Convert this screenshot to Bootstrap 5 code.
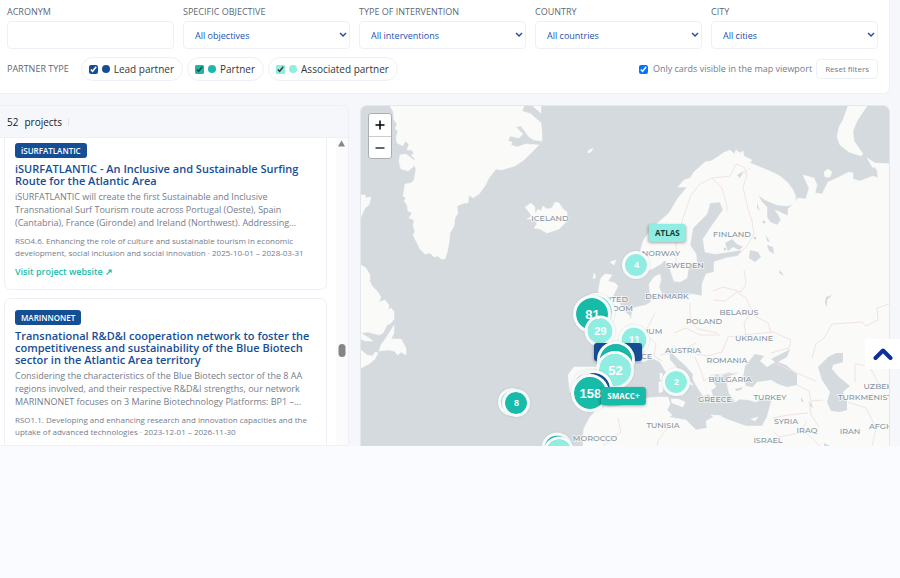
<!DOCTYPE html>
<html lang="en">
<head>
<meta charset="utf-8">
<meta name="viewport" content="width=device-width, initial-scale=1">
<title>Atlantic Area projects map</title>
<link href="https://cdn.jsdelivr.net/npm/bootstrap@5.3.0/dist/css/bootstrap.min.css" rel="stylesheet">
<style>
:root{--navy:#164e96;--teal:#18baa8;--mint:#8feee1;--line:#edf0f6;--muted-ink:#747c8b}
body{background:#fafbfe;font-family:"Segoe UI","Open Sans","Noto Sans",sans-serif;font-size:9px;line-height:14px;color:#22252b;overflow:hidden}
.viewer{background:#f5f7fb;height:77vh;min-height:446px;overflow:hidden;padding-right:10px}
.filters{border:1px solid var(--line);border-width:0 1px 1px 0;border-radius:0 0 7px 0;padding:5px 11px 12px 7px}
.filter-grid{display:grid;grid-template-columns:repeat(5,1fr);gap:9px}
.caption{font-size:9px;line-height:14px;color:#5d6876;font-weight:500;text-transform:uppercase;white-space:nowrap}
.filter-grid .caption{display:block;margin-bottom:2px}
.filter-grid .form-control,.filter-grid .form-select{height:28px;font-size:9px;line-height:14px;border-color:var(--line);border-radius:4px;color:#2450ad;font-weight:500;padding:6px 20px 4px 11px}
.filter-grid .form-select{background-image:url("data:image/svg+xml,%3csvg xmlns='http://www.w3.org/2000/svg' viewBox='0 0 8 6'%3e%3cpath fill='none' stroke='%232450ad' stroke-width='1.5' d='M1 1l3 3 3-3'/%3e%3c/svg%3e");background-size:8px 6px;background-position:right 2px center}
.pill{border:1px solid var(--line);border-radius:12px;height:24px;padding:0 8px 0 7px;gap:4px;color:#33373d;font-size:10px}
.pill input,.only-visible input{width:9px;height:9px;margin:0}
.dot{width:8px;height:8px;border-radius:50%}
.lead-c{accent-color:var(--navy)}.lead-d{background:var(--navy)}
.part-c{accent-color:var(--teal)}.part-d{background:var(--teal)}
.asso-c{accent-color:var(--mint)}.asso-d{background:var(--mint)}
.only-visible{color:var(--muted-ink);gap:5px}
.btn-reset{font-size:8px;line-height:14px;font-weight:500;color:#727985;background:#fff;border:1px solid var(--line);border-radius:4px;padding:2px 8px}
.panels{display:grid;grid-template-columns:349fr 529fr;gap:11px;padding-top:11px}
.project-panel{border:1px solid var(--line);border-left:0;border-radius:0 7px 0 0;min-height:0;overflow:hidden}
.panel-title{height:32px;padding-left:7px;font-size:10px;font-weight:500;border-bottom:1px solid var(--line);color:#15181d;gap:6px}
.tick-line{width:1px;height:8px;background:#e2e5ea}
.project-list{padding:0 9px 0 4px;gap:8px;min-height:0;overflow:hidden}
.project{border:1px solid var(--line);border-radius:7px;padding:11px 8px 10px 10px;flex:none}
.project.scrolled{border-top:0;border-radius:0 0 7px 7px;padding-top:5px}
.tag{background:var(--navy);color:#fff;font-size:8px;line-height:15px;font-weight:600;border-radius:3px;padding:0 6px}
.project h3{font-size:11px;line-height:12px;font-weight:600;color:var(--navy);margin:5px 0 3px}
.project .blurb{font-size:9px;line-height:13px;color:var(--muted-ink);margin:0 0 6px}
.project .meta{font-size:8px;line-height:12px;color:var(--muted-ink);margin:0 0 6px}
.project a{font-size:9px;line-height:14px;font-weight:600;color:#1cbcaa;text-decoration:none}
.scroll-track{width:12px;background:#fbfbfc}
.scroll-track svg{display:block;width:100%}
.map{background:#d4dadd;border:1px solid #e3e8ee;border-bottom:0;border-radius:7px 7px 0 0;overflow:hidden}
.map>svg{display:block;width:100%;height:100%}
.map text{font-family:"Montserrat","Inter",sans-serif;font-size:8px;font-weight:500;fill:#8795a5;stroke:#fafbfa;stroke-width:2px;stroke-opacity:.7;paint-order:stroke;text-anchor:middle}
.zoom{left:7px;top:7px;border:1px solid #a9afb3;border-radius:3px;background:#fff}
.zoom button{display:block;border:0;background:none;width:22px;height:22px;padding:0;line-height:0}
.zoom button+button{border-top:1px solid #ccc}
.pin{position:absolute;transform:translate(-50%,-50%);border:3px solid #f7fbfb;border-radius:50%;background:var(--mint);background-clip:padding-box;color:#fff;font:700 9px/1 "Liberation Sans",Arial,sans-serif;width:28px;height:28px;padding:0;box-shadow:0 0 2px #0002}
.pin.teal{background-color:var(--teal)}.pin.navy{background-color:var(--navy)}
.pin.mid{width:31px;height:31px;font-size:11px}
.pin.big{width:38px;height:38px;font-size:13px}
.pin-name{position:absolute;transform:translate(-50%,-50%);border:0;border-radius:3px;height:18px;padding:0 6px;font-size:8px;line-height:18px;font-weight:700;box-shadow:0 1px 3px #0005;white-space:nowrap}
.to-top{position:fixed;right:0;top:339px;width:35px;height:30px;border:0;background:#fff;padding:0 0 0 1px}
</style>
</head>
<body>
<main class="viewer d-flex flex-column">
<form class="filters bg-white">
  <div class="filter-grid">
    <div><label class="caption" for="acr">Acronym</label><input id="acr" class="form-control" type="text"></div>
    <div><label class="caption" for="obj">Specific objective</label><select id="obj" class="form-select"><option>All objectives</option></select></div>
    <div><label class="caption" for="typ">Type of intervention</label><select id="typ" class="form-select"><option>All interventions</option></select></div>
    <div><label class="caption" for="cou">Country</label><select id="cou" class="form-select"><option>All countries</option></select></div>
    <div><label class="caption" for="cit">City</label><select id="cit" class="form-select"><option>All cities</option></select></div>
  </div>
  <div class="d-flex align-items-center mt-2">
    <span class="caption me-2 pe-1">Partner type</span>
    <div class="d-flex gap-1">
      <label class="pill d-flex align-items-center"><input class="lead-c" type="checkbox" checked><span class="dot lead-d"></span>Lead partner</label>
      <label class="pill d-flex align-items-center"><input class="part-c" type="checkbox" checked><span class="dot part-d"></span>Partner</label>
      <label class="pill d-flex align-items-center"><input class="asso-c" type="checkbox" checked><span class="dot asso-d"></span>Associated partner</label>
    </div>
    <label class="only-visible d-flex align-items-center ms-auto me-1"><input type="checkbox" checked>Only cards visible in the map viewport</label>
    <button class="btn-reset" type="button">Reset filters</button>
  </div>
</form>

<div class="panels flex-grow-1 overflow-hidden">
  <section class="project-panel d-flex flex-column">
    <div class="panel-title d-flex align-items-center flex-shrink-0"><span>52</span><span>projects</span><span class="tick-line"></span></div>
    <div class="d-flex flex-grow-1 bg-white overflow-hidden">
      <div class="project-list d-flex flex-column flex-grow-1">
        <article class="project scrolled">
          <div class="d-flex"><span class="tag">iSURFATLANTIC</span></div>
          <h3>iSURFATLANTIC - An Inclusive and Sustainable Surfing Route for the Atlantic Area</h3>
          <p class="blurb">iSURFATLANTIC will create the first Sustainable and Inclusive<br>Transnational Surf Tourism route across Portugal (Oeste), Spain<br>(Cantabria), France (Gironde) and Ireland (Northwest). Addressing...</p>
          <p class="meta">RSO4.6. Enhancing the role of culture and sustainable tourism in economic<br>development, social inclusion and social innovation · 2025-10-01 – 2028-03-31</p>
          <a href="#">Visit project website ↗</a>
        </article>
        <article class="project">
          <div class="d-flex"><span class="tag">MARINNONET</span></div>
          <h3>Transnational R&amp;D&amp;I cooperation network to foster the competitiveness and sustainability of the Blue Biotech sector in the Atlantic Area territory</h3>
          <p class="blurb">Considering the characteristics of the Blue Biotech sector of the 8 AA<br>regions involved, and their respective R&amp;D&amp;I strengths, our network<br>MARINNONET focuses on 3 Marine Biotechnology Platforms: BP1 –...</p>
          <p class="meta">RSO1.1. Developing and enhancing research and innovation capacities and the<br>uptake of advanced technologies · 2023-12-01 – 2026-11-30</p>
        </article>
      </div>
      <div class="scroll-track flex-shrink-0"><svg viewBox="0 0 12 309" aria-hidden="true"><path d="M2 8.500L5.500 2.500 9 8.500Z" fill="#858585"/><rect x="2.500" y="206" width="7" height="13" rx="3.500" fill="#858585"/></svg></div>
    </div>
  </section>

  <section class="map position-relative" aria-label="Partner map">
    <svg viewBox="361 106 528 340" preserveAspectRatio="xMinYMin slice">
      <g fill="#fafbf9" stroke="#fafbf9" stroke-width=".5" stroke-linejoin="round">
        <path d="M390 106l3 5 1 9 3 4-2 5 3 2-2 6 1 6 6 3 2-5 4 3-2 6 5 0 2 4-3 1 4 4-1 6 2 4-2 11-3 3-6 1-1 6-1 6 3 2-2 3 3 4 1 6 4 2-3 5 5 2-1 6 2 5-2 4 3 6 4 8 5 5 5-1 4 4 4-1 3 3 4 0 2-6 2-10 1-10 4-7 1-8 3-5-1-7 7-3 4 0 1-8 4 3 6-4 6-8 4-8 7-9 5 1 14-4 9-6 15-15-13-1-9 3-6-2 1-3-4-1 2-5 9 2 4-4-7-7 5-1 8 11 5 3 8 1 0-9-1-9-10-9-9-3 3-7-3-3 7 2 12 10 0-11-9-6-2-4 6 1 2-4 12 1 5-3-3-6-4-1 0-4z"/>
        <path d="M400 155l6-1 9 7-2 6-5 4-7-2-2-7zM361 195l4 0 1 3 5-1-2 8-4 3-4 9zM361 265l5 3 4 7 0 5-9-2zM361 270l7 7 4 9 5 5 4 6-2 5 6-2 4 5-1 5 3-2 3 4 0 7-3 4-4 2-4 8-4 2-11-3-9 1z"/>
        <path d="M394 325l-6 10-7 10-2 6 10-1 5 1 4 4 3-3 5 3 0-7-5-9-7 0-3 0 3-6zM361 333l8 5 4 3-8 0-4-2zM361 350l6 5 6 1 2-4 3 1-3 6-6 5-8 4z"/>
        <path d="M525 207l6-4 4 4 0 7 3-5 3 2 2-5 4 3 5-1 3-6 4 1 4 6 4 3 0 9-8 8-12 4-7-4-6-1 3-4-3-5-7 0 5-3zM588 151l5-3-2 4-3 1z"/>
        <path d="M601 278l4-4 7 1-4 6 7 2 3 3-5 10 5 4 5 10 7 6-1 7-6 5-9 2-13 2-5-2 8-5-2-6 4-5 0-8-5-2 2-7-5-2 1-8zM594 303l-10-2-5 4-2 9 0 10 10-1 8-5 2-10z"/>
        <path d="M678 187l6-7 6-2 4-6 11-10 6-1 8-5 4-3 7-3 4 4 2-4 4 3 3-2 1 5 8 4-2 3 10 4 12 5 8 4 8 7 5 7 3 7-2 6-6 3-11-1-12-5-7-5 4 7 5 5 0 10 3 5 7 3 4-5-2-4-4-6 5 2 8 4 0-7 10-11 8 1 3-11-6-13 11 3 3 7-2 8 7 1 6-12 9-4 12-6 4 1 0 6 7 2 13-5 5 2-1-8-4-5 2-2 17 1v290H583l0-19 1-7 6-11 10-11 2-4 6 5 12-1 17-7 20-2 11 0 2 7-3 6 5 5-3 2 17 3 10 10 11-2-1-7 11-6 12 5 17 6 16 0 5-9 5-18-9-1-7 4-7-2-9-1-5 3-6-9-2-9 2-8 8-2-9-2-7 4-5-2-4 5 4 8-5 3 2 7-5-3-5 2-7-11-3-6 0-5-7-8-10-9-7-7 1 10 8 9 9 8 6 8-6-1-2 9-4 3 0-8-13-12-8-14-8-4-9 4-8-2-6 8-11 8-7 13-6 10-12 2-10-3-5 0-8-6-2-17 6-8 22 0 7-10-2-10-8-8 4-3 9 2 3-4 7-6 10-4 5-6 2-10 13-3 5-3-2-18 5-7 6-3 1 6-2 7 4 10 14 1 15-4 10 2 0-12 4-10 8-2 0-10 12-4 12-2 4-6-27 4-10-2-2-13 10-15 10-14-3-8-10 1-3 11-14 14-3 17 6 9 1 8-8 2-2 14-7 4-6-1-4-12-5-9-4 4-11 6-8-6-2-12 3-11 8-12 18-16 9-15 9-11z"/>
        <path d="M848 106l-5 14-4 7-2 10 3 8 9 7 12 4 2-2-9-13-1-10 4-10 6-9 4-6zM824 172l4-3 4 3-2 5-5 0zM867 158l8 5-2 5zM678 299l5-2 3 5-5 2zM671 399h7l7 3-2 5-11-4zM659 382l4-1 0 10-4 2zM660 373l3 1-1 7-2-2zM711 415l11 1-7 2zM751 419l7-2-3 4zM635 394l4-1-1 2zM594 273l2 4-3 2zM610 262l6-2-2 5z"/>
      </g>
      <g fill="#d4dadd">
        <path d="M743 378l2-12 5-6 5-6 9 2-4 5 7 6 8-5-4-3 14-7 5-3-3 8-9 5 8 3 11 9 0 11-10 2-9-3-7-4-14 2-4 5-7-1zM735 389l8-2-2 3-5 1zM818 367l10-10 8-4 7 0 0 9-10 3-1 4 7 8 11 9-7 6 4 9 0 9-7 2-9-1-4-9 3-10-8-12zM750 250l8 2 3 5-6 5-6-4zM767 245l6 2 1 7-5-3zM737 175l7-4-4 7zM698 239l2 3 1 8-4 1zM725 243l7-4 5 5 6 3-4 3-6-3-5 4zM771 210l3 8-3-2zM766 235l4 7-3-1zM757 203l3 8-3-3zM826 297l6-2-5 5 0 7-2-4zM780 270l4 6-5-3zM801 397l3 5-3-1zM811 401l2 8-3-4zM824 443l6 3h-6z"/>
        <circle cx="720" cy="360" r="1"/><circle cx="725" cy="249" r="1.500"/><circle cx="755" cy="238" r="1.500"/><circle cx="764" cy="222" r="1.500"/>
      </g>
      <g fill="none" stroke="#f2e2e2" stroke-width="1" stroke-linejoin="round">
        <path d="M676 265v-22l7-25 8-23 9-11 12-6 10 10 5 18 0 5M712 178l18-2 6-12 8 3 3 8-4 12 5 22 4 12 2 13-8 13-8 8M750 168l-6 5M713 291l10-4 18 5 5-8-2-14M713 300l12 1 12-9 9 6 6 13-8 12 2 12-8 8M690 303l0 18 8 8 20 4M655 313l-7 14-7 6M646 334l10 10-2 12 8 5M660 355l20-4 16-8M674 333l12-5 14 7 20 0M686 350l10 4 12 2 14-4 6-15 25-3 20-2 18 8-2 8-18 5M695 357l6 14 3 10 8-6 26-2M708 382l10-2 18 2M775 363l17 8 14 6 10 4M797 385l12 6 2 10 12-1M809 401l2 14 8 12M773 418l15-3 20-2M773 431l6 6 20-4 8-12M812 358l4-14 8-6 8-14 30-2 4 4 12-6-1-12 12-4M855 382v-18l14 2 10 18 11 2M848 402l18 6 10 20-4 18M668 427l-10 14-1 5M618 418l3 14-18 14M800 427l20 19M753 315l15 8 3 10"/>
      </g>
      <g>
        <text x="550" y="221">ICELAND</text><text x="732" y="237">FINLAND</text><text x="661" y="256">NORWAY</text><text x="685" y="268">SWEDEN</text><text x="667" y="299">DENMARK</text><text x="612" y="302">UNITED</text><text x="612" y="311">KINGDOM</text><text x="739" y="315">BELARUS</text><text x="704" y="324">POLAND</text><text x="643" y="334">BELGIUM</text><text x="754" y="341">UKRAINE</text><text x="635" y="359">FRANCE</text><text x="683" y="353">AUSTRIA</text><text x="727" y="363">ROMANIA</text><text x="730" y="382">BULGARIA</text><text x="715" y="402">GREECE</text><text x="770" y="400">TURKEY</text><text x="663" y="428">TUNISIA</text><text x="595" y="441">MOROCCO</text><text x="786" y="424">SYRIA</text><text x="807" y="433">IRAQ</text><text x="850" y="434">IRAN</text><text x="768" y="443">ISRAEL</text><text x="890" y="389">UZBEKISTAN</text><text x="871" y="400">TURKMENISTAN</text><text x="899" y="429">AFGHANISTAN</text>
      </g>
    </svg>
    <div class="zoom position-absolute">
      <button type="button" aria-label="Zoom in"><svg width="10" height="10" viewBox="0 0 10 10"><path d="M5 .5v9M.5 5h9" stroke="#000" stroke-width="1.500"/></svg></button>
      <button type="button" aria-label="Zoom out"><svg width="10" height="10" viewBox="0 0 10 10"><path d="M.5 5h9" stroke="#333" stroke-width="1.500"/></svg></button>
    </div>
    <button type="button" class="pin-name" style="left:306px;top:127px;background:#8feee1;color:#173c3a">ATLAS</button>
    <button type="button" class="pin" style="left:275px;top:159px">4</button>
    <button type="button" class="pin big" style="left:235px;top:206px"></button>
    <button type="button" class="pin big teal" style="left:231px;top:208px">81</button>
    <button type="button" class="pin mid" style="left:273px;top:234px">11</button>
    <button type="button" class="pin mid" style="left:239px;top:225px">29</button>
    <span class="pin-name text-white" style="left:257px;top:246px;width:48px;background:#164e96"></span>
    <button type="button" class="pin big teal" style="left:255px;top:254px">109</button>
    <button type="button" class="pin big" style="left:254px;top:264px">52</button>
    <button type="button" class="pin big" style="left:229px;top:282px"></button>
    <button type="button" class="pin big navy" style="left:233px;top:283px"></button>
    <button type="button" class="pin big teal" style="left:229px;top:287px">158</button>
    <button type="button" class="pin-name text-white" style="left:262px;top:290px;background:#18baa8">SMACC+</button>
    <button type="button" class="pin" style="left:315px;top:276px">2</button>
    <button type="button" class="pin" style="left:151px;top:296px"></button>
    <button type="button" class="pin teal" style="left:155px;top:297px">8</button>
    <button type="button" class="pin mid teal" style="left:196px;top:342px"></button>
    <button type="button" class="pin mid" style="left:198px;top:346px"></button>
  </section>
</div>
</main>
<button class="to-top" type="button" aria-label="Back to top"><svg width="20" height="14" viewBox="0 0 20 14"><path d="M2.500 11L10 3.500 17.500 11" fill="none" stroke="#0b2f9b" stroke-width="4" stroke-linecap="round" stroke-linejoin="round"/></svg></button>
<script src="https://cdn.jsdelivr.net/npm/bootstrap@5.3.0/dist/js/bootstrap.bundle.min.js"></script>
</body>
</html>
